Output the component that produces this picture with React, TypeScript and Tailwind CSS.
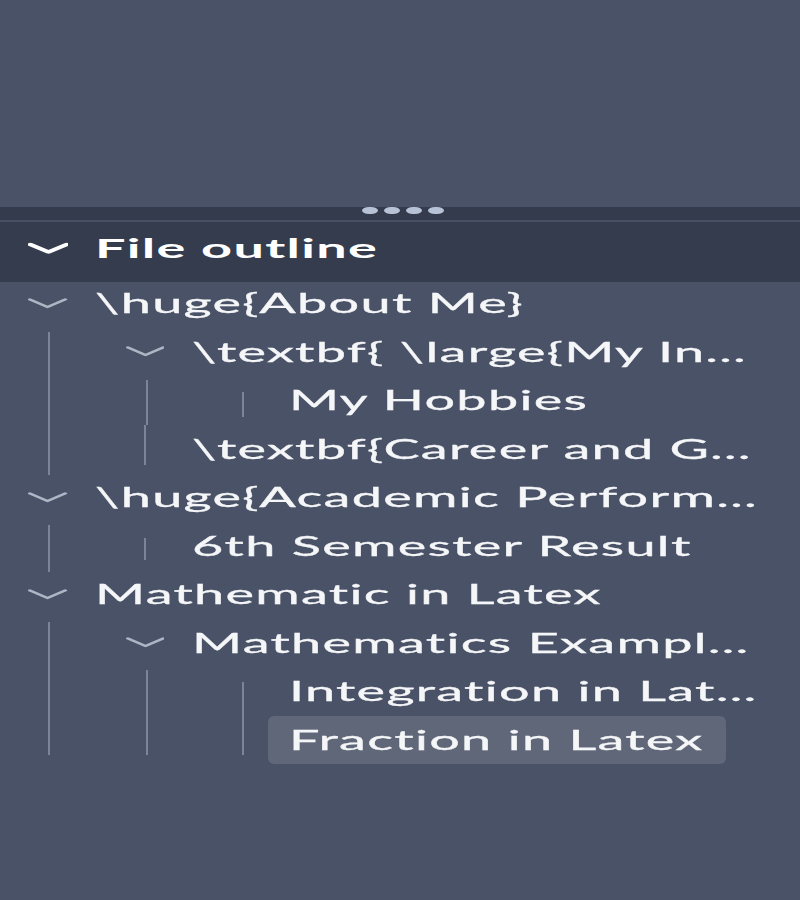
import React from "react";

const PAD: Record<number, string> = {
  0: "pl-0",
  1: "pl-[48.5px]",
  2: "pl-[97px]",
};

function Chevron({ bold = false }: { bold?: boolean }) {
  return (
    <svg
      width={bold ? 20.5 : 19.5}
      height={13}
      viewBox={bold ? "0 0 20.5 13" : "0 0 19.5 13"}
      fill="none"
      className={bold ? "text-white" : "text-[#aeb5c4]"}
    >
      <polyline
        points={bold ? "1.2,2.5 10.25,10 19.3,2.5" : "1,2.5 9.75,10 18.5,2.5"}
        stroke="currentColor"
        strokeWidth={bold ? 3.2 : 2.2}
        strokeLinecap="round"
        strokeLinejoin="round"
        vectorEffect="non-scaling-stroke"
      />
    </svg>
  );
}

type RowProps = {
  depth: number;
  label: string;
  expandable?: boolean;
  selected?: boolean;
  line?: string;
};

function Row({ depth, label, expandable, selected, line }: RowProps) {
  return (
    <div className={`relative flex h-[48.5px] items-center pr-[8px] ${PAD[depth]}`}>
      <div className="relative ml-[11px] flex h-full w-[26px] shrink-0 items-center justify-center">
        {expandable && <Chevron />}
        {line && <div className={`absolute left-[12.5px] w-px bg-[#7c8497] ${line}`} />}
      </div>
      <div
        className={`min-w-0 truncate pl-[10.5px] pr-[11px] text-[27px] leading-[48.5px] tracking-[0.65px] text-[#f5f6f8] [-webkit-text-stroke:0.3px_#f5f6f8] ${
          selected ? "rounded-[3px_/_6px] bg-[#5f6779]" : ""
        }`}
      >
        {label}
      </div>
    </div>
  );
}

function Guide({ cls }: { cls: string }) {
  return <div className={`absolute w-px bg-[#7c8497] ${cls}`} />;
}

export default function App() {
  return (
    <div className="h-[900px] w-[800px] overflow-hidden bg-[#4a5267] font-['Lato',sans-serif]">
      <div className="w-[400px] origin-top-left scale-x-200">
        <div className="h-[207px]" />
        <div className="flex h-[13px] justify-center gap-[2.7px] bg-[#333b4c] pl-[3px]">
          <div className="h-[7px] w-[8px] rounded-full bg-[#b7c2d6]" />
          <div className="h-[7px] w-[8px] rounded-full bg-[#b7c2d6]" />
          <div className="h-[7px] w-[8px] rounded-full bg-[#b7c2d6]" />
          <div className="h-[7px] w-[8px] rounded-full bg-[#b7c2d6]" />
        </div>
        <div className="h-[2px] bg-[#485066]" />
        <div className="flex h-[60px] items-center bg-[#343c4d] pb-[8px]">
          <div className="ml-[11px] flex w-[26px] shrink-0 items-center justify-center">
            <Chevron bold />
          </div>
          <div className="pl-[10.5px] pr-3 text-[27px] font-bold leading-[48.5px] tracking-[0.65px] text-white">
            File outline
          </div>
        </div>

        <div className="-mt-[3px]">
          <Row depth={0} label="\huge{About Me}" expandable />
          <div className="relative">
            <Guide cls="left-[23.5px] top-[4.5px] -bottom-[2px]" />
            <Row depth={1} label="\textbf{ \large{My Interests}}" expandable />
            <div className="relative">
              <Guide cls="left-[72.5px] top-[4px] bottom-0" />
              <Row depth={2} label="My Hobbies" line="top-[16px] bottom-[7.5px]" />
            </div>
            <Row depth={1} label="\textbf{Career and Goals}" line="top-0 bottom-[8px]" />
          </div>

          <Row depth={0} label="\huge{Academic Performance}" expandable />
          <div className="relative">
            <Guide cls="left-[23.5px] top-[3.5px] -bottom-[2px]" />
            <Row depth={1} label="6th Semester Result" line="top-[16.5px] bottom-[10px]" />
          </div>

          <Row depth={0} label="Mathematic in Latex" expandable />
          <div className="relative">
            <Guide cls="left-[23.5px] top-[3.5px] bottom-[9px]" />
            <Row depth={1} label="Mathematics Examples" expandable />
            <div className="relative">
              <Guide cls="left-[72.5px] top-[3px] bottom-[9px]" />
              <Row depth={2} label="Integration in Latex" line="top-[15px] -bottom-[16px]" />
              <Row depth={2} label="Fraction in Latex" selected line="top-[16px] bottom-[9px]" />
            </div>
          </div>
        </div>
      </div>
    </div>
  );
}
